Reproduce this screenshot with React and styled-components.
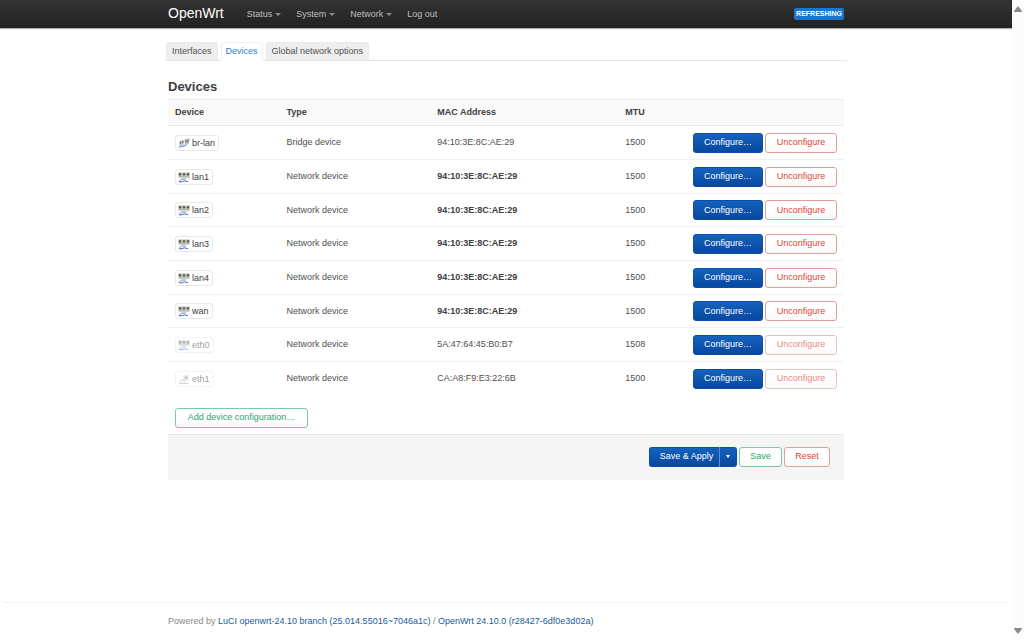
import React from 'react'
import styled, { createGlobalStyle, css } from 'styled-components'

const GlobalStyle = createGlobalStyle`
  * {
    box-sizing: border-box;
  }

  body {
    margin: 0;
    background: #fff;
    color: #404040;
    font: 9px/13px "Liberation Sans", Arial, sans-serif;
  }

  a {
    color: #1a5a9e;
    text-decoration: none;
  }
`

const Page = styled.div`
  display: grid;
  grid-template-columns: minmax(0, 1fr) 12px;
  min-height: 100vh;
`

const Content = styled.div`
  display: flex;
  flex-direction: column;
`

const ScrollTrack = styled.div`
  display: flex;
  flex-direction: column;
  align-items: center;
  justify-content: space-between;
  padding: 6px 0;
  background: #fcfcfc;
`

const Arrow = styled.svg`
  width: 8px;
  height: 6px;
  fill: #8a8a8a;
`

const Container = styled.div`
  width: 100%;
  max-width: 676px;
  margin: 0 auto;
`

const Header = styled.header`
  background: linear-gradient(#333, #222);
  box-shadow: 0 1px 1px rgba(0, 0, 0, 0.3);
`

const Bar = styled(Container)`
  display: flex;
  align-items: center;
  height: 28px;
`

const Brand = styled.a`
  margin-right: 23px;
  color: #fff;
  font-size: 14px;
  line-height: 16px;
  padding-bottom: 2px;
`

const Nav = styled.nav`
  display: flex;
  flex: 1;
  gap: 15px;
`

const NavLink = styled.a`
  display: flex;
  align-items: center;
  gap: 3px;
  color: #bfbfbf;
`

const Caret = styled.span`
  border: solid transparent;
  border-width: 3px 3px 0;
  border-top-color: #8c8c8c;
`

const Indicator = styled.span`
  padding: 0 2px;
  border-radius: 2px;
  background: #1976c8;
  color: #fff;
  font-size: 7px;
  font-weight: bold;
  line-height: 12px;
`

const Main = styled(Container)`
  flex: 1;
`

const Tabs = styled.nav`
  display: flex;
  gap: 3px;
  margin: 14px -3px 0;
  padding: 0 1px;
  border-bottom: 1px solid #e6e6e6;
`

const Tab = styled.a`
  margin-bottom: -1px;
  padding: 2px 5px;
  border: 1px solid #ebebeb;
  border-bottom-color: #e0e0e0;
  border-radius: 3px 3px 0 0;
  background: #eee;
  color: #505050;

  ${props => props.$active && css`
    padding: 2px 4px;
    border-color: #f0f0f0;
    border-bottom-color: #fff;
    background: #fff;
    color: #2a80cc;
  `}
`

const Title = styled.h2`
  margin: 17px 0 4px;
  font-size: 13px;
  line-height: 17px;
`

const Table = styled.table`
  width: 100%;
  border-collapse: collapse;
  table-layout: fixed;
`

const Row = styled.tr`
  height: 34px;
  border-bottom: 1px solid #f0f0f0;

  &:nth-child(3n) {
    height: 33px;
  }

  &:last-child {
    border-bottom: 0;
  }
`

const HeadRow = styled.tr`
  height: 26px;
  border: solid #ebebeb;
  border-width: 1px 0;
  background: #f9f9f9;
`

const Th = styled.th`
  width: ${props => props.$width};
  padding: 0 7px;
  text-align: left;
`

const Td = styled.td`
  padding: 0 7px;
  color: ${props => (props.$bold ? '#404040' : '#505050')};
  font-weight: ${props => (props.$bold ? 'bold' : 'normal')};
`

const Badge = styled.span`
  display: inline-flex;
  align-items: center;
  gap: 2px;
  padding: 0 3px 0 2px;
  border: 1px solid #e8e8e8;
  border-radius: 3px;
  color: #404040;
  line-height: 14px;
  vertical-align: middle;
  opacity: ${props => (props.$dim ? 0.5 : 1)};
`

const Icon = styled.svg`
  width: 12px;
  height: 12px;
`

const Actions = styled.div`
  display: flex;
  justify-content: flex-end;
  gap: 2px;
`

const tones = {
  primary: css`
    border-color: #0b4fae;
    background: linear-gradient(#1462bc, #0847a0);
    color: #fff;
  `,
  positive: css`
    border-color: #7cc9a9;
    color: #27a770;
  `,
  negative: css`
    border-color: #e0a097;
    color: #dd4533;
  `,
}

const Button = styled.button`
  height: 20px;
  min-width: ${props => props.$min || '0'};
  padding: 0 9px;
  border: 1px solid;
  border-radius: 3px;
  background: linear-gradient(#fff 50%, #f8f8f8);
  font: inherit;
  cursor: pointer;
  ${props => tones[props.$tone]}

  &:disabled {
    opacity: 0.65;
    cursor: default;
  }
`

const AddRow = styled.div`
  padding: 12px 7px 6px;
`

const PageActions = styled.div`
  display: flex;
  justify-content: flex-end;
  gap: 2px;
  padding: 12px 14px 13px;
  border-top: 1px solid #e8e8e8;
  background: #f5f5f5;
`

const Split = styled.div`
  display: flex;
`

const SplitMain = styled(Button)`
  padding: 0 4px 0 8px;
  border-right: 0;
  border-radius: 3px 0 0 3px;
`

const SplitToggle = styled(Button)`
  display: flex;
  align-items: center;
  justify-content: center;
  width: 18px;
  padding: 0;
  border-left-color: #5c8fd0;
  border-radius: 0 3px 3px 0;
`

const ToggleCaret = styled.span`
  border: solid transparent;
  border-width: 3px 2px 0;
  border-top-color: #fff;
`

const Footer = styled.footer`
  margin: 0 3px;
  padding: 12px 0;
  border-top: 1px solid #f2f2f2;
  color: #888;
`

const devices = [
  { name: 'br-lan', kind: 'bridge', mac: '94:10:3E:8C:AE:29', mtu: 1500 },
  { name: 'lan1', kind: 'switch', mac: '94:10:3E:8C:AE:29', mtu: 1500, custom: true },
  { name: 'lan2', kind: 'switch', mac: '94:10:3E:8C:AE:29', mtu: 1500, custom: true },
  { name: 'lan3', kind: 'switch', mac: '94:10:3E:8C:AE:29', mtu: 1500, custom: true },
  { name: 'lan4', kind: 'switch', mac: '94:10:3E:8C:AE:29', mtu: 1500, custom: true },
  { name: 'wan', kind: 'switch', mac: '94:10:3E:8C:AE:29', mtu: 1500, custom: true },
  { name: 'eth0', kind: 'switch', mac: '5A:47:64:45:B0:B7', mtu: 1508, unset: true },
  { name: 'eth1', kind: 'ethernet', mac: 'CA:A8:F9:E3:22:6B', mtu: 1500, unset: true },
]

function DeviceIcon({ kind }) {
  if (kind === 'bridge') {
    return (
      <Icon viewBox="0 0 12 12">
        <path d="M6.5 2.2L11.5 1l-.4 5.6L7 9z" fill="#bcc0c0" />
        <path d="M1 4.2L6 2.6v4.8L1.4 9z" fill="#c9cccb" />
        <path d="M2 5h1.2v1.6H2zM4 4.2h1.2v1.6H4zM7.4 3.6h1v1.8h-1zM9.4 3h1v1.8h-1z" fill="#4c5254" />
        <path d="M1 10.6l2-1.8 2.4.6L8 8" fill="none" stroke="#7c90c8" strokeWidth="1.2" />
      </Icon>
    )
  }
  if (kind === 'ethernet') {
    return (
      <Icon viewBox="0 0 12 12">
        <path d="M5 2.6L10.6 1.6v6L6 8.6z" fill="#d6d9d7" />
        <path d="M7.2 3.6h2v2h-2z" fill="#666" />
        <path d="M1 10.4L4.6 6l2 3M1.4 10.4h9" fill="none" stroke="#a6a6a6" />
      </Icon>
    )
  }
  return (
    <Icon viewBox="0 0 12 12">
      <path d="M0 1h12v6H0z" fill="#dcdfd4" />
      <path d="M.8 2.2h2.6v2.2H.8zM4.7 2.2h2.6v2.2H4.7zM8.6 2.2h2.6v2.2H8.6z" fill="#54564f" />
      <path d="M1 5.2h10v1H1z" fill="#a9aca4" />
      <path d="M1 10.8L3.4 8H8" fill="none" stroke="#7f8fb8" />
      <path d="M1 10.8h3l2-1 4 .8" fill="none" stroke="#4c6cc4" />
    </Icon>
  )
}

function DeviceRow({ name, kind, mac, mtu, custom, unset }) {
  return (
    <Row>
      <Td>
        <Badge $dim={unset}>
          <DeviceIcon kind={kind} />
          {name}
        </Badge>
      </Td>
      <Td>{kind === 'bridge' ? 'Bridge device' : 'Network device'}</Td>
      <Td $bold={custom}>{mac}</Td>
      <Td>{mtu}</Td>
      <Td>
        <Actions>
          <Button $tone="primary" $min="70px">Configure…</Button>
          <Button $tone="negative" $min="72px" disabled={unset}>Unconfigure</Button>
        </Actions>
      </Td>
    </Row>
  )
}

export default function App() {
  return (
    <Page>
      <GlobalStyle />
      <Content>
        <Header>
          <Bar>
            <Brand href="#">OpenWrt</Brand>
            <Nav>
              <NavLink href="#status">Status<Caret /></NavLink>
              <NavLink href="#system">System<Caret /></NavLink>
              <NavLink href="#network">Network<Caret /></NavLink>
              <NavLink href="#logout">Log out</NavLink>
            </Nav>
            <Indicator>REFRESHING</Indicator>
          </Bar>
        </Header>
        <Main as="main">
          <Tabs>
            <Tab href="#interfaces">Interfaces</Tab>
            <Tab href="#devices" $active>Devices</Tab>
            <Tab href="#globals">Global network options</Tab>
          </Tabs>
          <Title>Devices</Title>
          <Table>
            <thead>
              <HeadRow>
                <Th $width="16.5%">Device</Th>
                <Th $width="22.3%">Type</Th>
                <Th $width="27.8%">MAC Address</Th>
                <Th $width="10%">MTU</Th>
                <Th aria-label="Actions" />
              </HeadRow>
            </thead>
            <tbody>
              {devices.map(device => <DeviceRow key={device.name} {...device} />)}
            </tbody>
          </Table>
          <AddRow>
            <Button $tone="positive" $min="133px">Add device configuration…</Button>
          </AddRow>
          <PageActions>
            <Split>
              <SplitMain $tone="primary" $min="70px">Save &amp; Apply</SplitMain>
              <SplitToggle $tone="primary" aria-label="More apply options"><ToggleCaret /></SplitToggle>
            </Split>
            <Button $tone="positive" $min="43px">Save</Button>
            <Button $tone="negative" $min="46px">Reset</Button>
          </PageActions>
        </Main>
        <Footer>
          <Container>
            Powered by <a href="#luci">LuCI openwrt-24.10 branch (25.014.55016~7046a1c)</a>
            {' / '}
            <a href="#openwrt">OpenWrt 24.10.0 (r28427-6df0e3d02a)</a>
          </Container>
        </Footer>
      </Content>
      <ScrollTrack>
        <Arrow viewBox="0 0 8 6"><path d="M4 0l4 5v1H0V5z" /></Arrow>
        <Arrow viewBox="0 0 8 6"><path d="M4 6l4-5V0H0v1z" /></Arrow>
      </ScrollTrack>
    </Page>
  )
}
